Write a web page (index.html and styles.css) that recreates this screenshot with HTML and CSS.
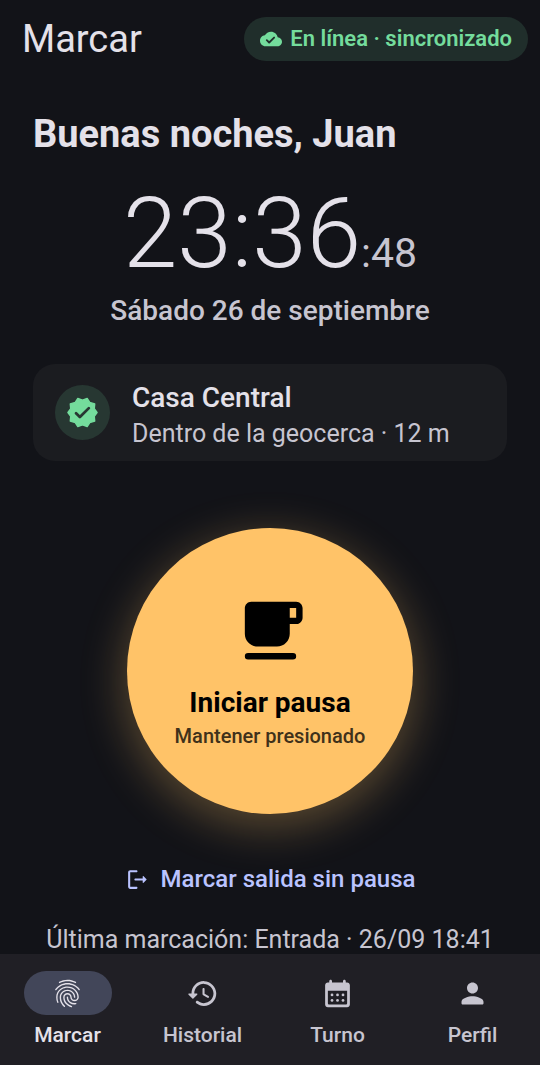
FILE: index.html
```html
<!DOCTYPE html>
<html lang="es">
<head>
<meta charset="utf-8">
<meta name="viewport" content="width=device-width, initial-scale=1">
<title>Marcar</title>
<link rel="stylesheet" href="styles.css">
</head>
<body class="app">
<header class="topbar">
  <h1 class="topbar-title">Marcar</h1>
  <div class="sync" role="status">
    <svg class="icon-sync" viewBox="0 0 24 24" aria-hidden="true">
      <path fill="currentColor" d="M19.35 10.04C18.67 6.59 15.64 4 12 4 9.11 4 6.6 5.64 5.35 8.04 2.34 8.36 0 10.91 0 14c0 3.31 2.69 6 6 6h13c2.76 0 5-2.24 5-5 0-2.64-2.05-4.78-4.65-4.96z"/>
      <path class="sync-check" d="M7.4 13.2l2.6 2.6 5.4-5.4"/>
    </svg>
    <span>En línea · sincronizado</span>
  </div>
</header>

<main class="content">
  <h2 class="greeting">Buenas noches, Juan</h2>
  <time class="clock">23:36<span class="seconds">:48</span></time>
  <p class="date">Sábado 26 de septiembre</p>

  <section class="place">
    <span class="place-badge">
      <svg class="icon-place" viewBox="0 0 24 24" aria-hidden="true">
        <path class="star" d="M22.6 12l-2.04-2.79.34-3.49-3.61-1.03L15.4 1.8 12 2.96 8.6 1.8 6.71 4.69 3.1 5.7l.34 3.5L1.4 12l2.04 2.79-.34 3.5 3.61 1.02L8.6 22.2l3.4-1.17 3.4 1.16 1.89-2.89 3.61-1.02-.34-3.49z"/>
        <path class="star-check" d="M7.3 12.5l2.8 2.8 6.5-6.5"/>
      </svg>
    </span>
    <div class="place-text">
      <h3 class="place-name">Casa Central</h3>
      <p class="place-info">Dentro de la geocerca · 12 m</p>
    </div>
  </section>

  <button class="punch" type="button">
    <svg class="icon-cup" viewBox="0 0 24 24" aria-hidden="true">
      <path fill="currentColor" fill-rule="evenodd" d="M6 3h14c1.1 0 2 .9 2 2v3c0 1.1-.9 2-2 2h-2v3c0 2.21-1.79 4-4 4H8c-2.21 0-4-1.79-4-4V5c0-1.1.9-2 2-2zm12 2v3h2V5zM5 19h14a1 1 0 0 1 0 2H5a1 1 0 0 1 0-2z"/>
    </svg>
    <span class="punch-label">Iniciar pausa</span>
    <span class="punch-hint">Mantener presionado</span>
  </button>

  <button class="leave" type="button">
    <svg class="icon-leave" viewBox="0 0 24 24" aria-hidden="true">
      <path fill="currentColor" d="M5 5h6c.55 0 1-.45 1-1s-.45-1-1-1H5c-1.1 0-2 .9-2 2v14c0 1.1.9 2 2 2h6c.55 0 1-.45 1-1s-.45-1-1-1H5V5zm15.65 6.65-2.79-2.79a.5.5 0 0 0-.86.35V11h-7c-.55 0-1 .45-1 1s.45 1 1 1h7v1.79c0 .45.54.67.85.35l2.79-2.79c.2-.19.2-.51.01-.7z"/>
    </svg>
    <span>Marcar salida sin pausa</span>
  </button>

  <p class="last">Última marcación: Entrada · 26/09 18:41</p>
</main>

<nav class="tabs">
  <a class="tab tab-active" href="#marcar" aria-current="page">
    <span class="tab-pill">
      <svg class="icon-tab" viewBox="0 0 24 24" aria-hidden="true">
        <path fill="currentColor" d="M17.81 4.47c-.08 0-.16-.02-.23-.06C15.66 3.42 14 3 12.01 3c-1.98 0-3.86.47-5.57 1.41-.24.13-.54.04-.68-.2-.13-.24-.04-.55.2-.68C7.82 2.52 9.86 2 12.01 2c2.13 0 3.99.47 6.03 1.52.25.13.34.43.21.67-.09.18-.26.28-.44.28zM3.5 9.72c-.1 0-.2-.03-.29-.09-.23-.16-.28-.47-.12-.7.99-1.4 2.25-2.5 3.75-3.27C9.98 4.04 14 4.03 17.15 5.65c1.5.77 2.76 1.86 3.75 3.25.16.22.11.54-.12.7-.23.16-.54.11-.7-.12-.9-1.26-2.04-2.25-3.39-2.94-2.87-1.47-6.54-1.47-9.4.01-1.36.7-2.5 1.7-3.4 2.96-.08.14-.23.21-.39.21zm6.25 12.07c-.13 0-.26-.05-.35-.15-.87-.87-1.34-1.43-2.01-2.64-.69-1.23-1.05-2.73-1.05-4.34 0-2.97 2.54-5.39 5.66-5.39s5.66 2.42 5.66 5.39c0 .28-.22.5-.5.5s-.5-.22-.5-.5c0-2.42-2.09-4.39-4.66-4.39-2.57 0-4.66 1.97-4.66 4.39 0 1.44.32 2.77.93 3.85.64 1.15 1.08 1.64 1.85 2.42.19.2.19.51 0 .71-.11.1-.24.15-.37.15zm7.17-1.85c-1.19 0-2.24-.3-3.1-.89-1.49-1.01-2.38-2.65-2.38-4.39 0-.28.22-.5.5-.5s.5.22.5.5c0 1.41.72 2.74 1.94 3.56.71.48 1.54.71 2.54.71.24 0 .64-.03 1.04-.1.27-.05.53.13.58.41.05.27-.13.53-.41.58-.57.11-1.07.12-1.21.12zM14.91 22c-.04 0-.09-.01-.13-.02-1.59-.44-2.63-1.03-3.72-2.1-1.4-1.39-2.17-3.24-2.17-5.22 0-1.62 1.38-2.94 3.08-2.94 1.7 0 3.08 1.32 3.08 2.94 0 1.07.93 1.94 2.08 1.94s2.08-.87 2.08-1.94c0-3.77-3.25-6.83-7.25-6.83-2.84 0-5.44 1.58-6.61 4.03-.39.81-.59 1.76-.59 2.8 0 .78.07 2.01.67 3.61.1.26-.03.55-.29.64-.26.1-.55-.04-.64-.29-.49-1.31-.73-2.61-.73-3.96 0-1.2.23-2.29.68-3.24 1.33-2.79 4.28-4.6 7.51-4.6 4.55 0 8.25 3.51 8.25 7.83 0 1.62-1.38 2.94-3.08 2.94s-3.08-1.32-3.08-2.94c0-1.07-.93-1.94-2.08-1.94s-2.08.87-2.08 1.94c0 1.71.66 3.31 1.87 4.51.95.94 1.86 1.46 3.27 1.85.27.07.42.35.35.61-.05.23-.26.38-.47.38z"/>
      </svg>
    </span>
    <span>Marcar</span>
  </a>
  <a class="tab" href="#historial">
    <span class="tab-pill">
      <svg class="icon-tab" viewBox="0 0 24 24" aria-hidden="true">
        <path fill="currentColor" d="M13.26 3C8.17 2.86 4 6.95 4 12H2.21c-.45 0-.67.54-.35.85l2.79 2.8c.2.2.51.2.71 0l2.79-2.8c.31-.31.09-.85-.36-.85H6c0-3.9 3.18-7.05 7.1-7 3.72.05 6.85 3.18 6.9 6.9.05 3.91-3.1 7.1-7 7.1-1.61 0-3.1-.55-4.28-1.48-.4-.31-.96-.28-1.32.08-.42.42-.39 1.13.08 1.49C9 20.29 10.91 21 13 21c5.05 0 9.14-4.17 9-9.26-.13-4.69-4.05-8.61-8.74-8.74zm-.51 5c-.41 0-.75.34-.75.75v3.68c0 .35.19.68.49.86l3.12 1.85c.36.21.82.09 1.03-.26.21-.36.09-.82-.26-1.03l-2.88-1.71v-3.4c0-.4-.34-.74-.75-.74z"/>
      </svg>
    </span>
    <span>Historial</span>
  </a>
  <a class="tab" href="#turno">
    <span class="tab-pill">
      <svg class="icon-tab" viewBox="0 0 24 24" aria-hidden="true">
        <path fill="currentColor" fill-rule="evenodd" d="M19 4h-1V3c0-.55-.45-1-1-1s-1 .45-1 1v1H8V3c0-.55-.45-1-1-1s-1 .45-1 1v1H5c-1.11 0-2 .9-2 2v14c0 1.1.89 2 2 2h14c1.1 0 2-.9 2-2V6c0-1.1-.9-2-2-2zm0 15c0 .55-.45 1-1 1H6c-.55 0-1-.45-1-1v-9h14v9z"/>
        <g fill="currentColor">
          <circle cx="8" cy="13" r="1"/><circle cx="12" cy="13" r="1"/><circle cx="16" cy="13" r="1"/>
          <circle cx="8" cy="17" r="1"/><circle cx="12" cy="17" r="1"/><circle cx="16" cy="17" r="1"/>
        </g>
      </svg>
    </span>
    <span>Turno</span>
  </a>
  <a class="tab" href="#perfil">
    <span class="tab-pill">
      <svg class="icon-tab" viewBox="0 0 24 24" aria-hidden="true">
        <path fill="currentColor" d="M12 12c2.21 0 4-1.79 4-4s-1.79-4-4-4-4 1.79-4 4 1.79 4 4 4zm0 2c-2.67 0-8 1.34-8 4v1c0 .55.45 1 1 1h14c.55 0 1-.45 1-1v-1c0-2.66-5.33-4-8-4z"/>
      </svg>
    </span>
    <span>Perfil</span>
  </a>
</nav>
</body>
</html>
```
FILE: styles.css
```css
* {
  box-sizing: border-box;
}

.app {
  margin: 0;
  min-height: 100vh;
  display: flex;
  flex-direction: column;
  background: #121318;
  color: #e4e1e9;
  font-family: Roboto, "Noto Sans", sans-serif;
}

h1, h2, h3, p {
  margin: 0;
}

button {
  border: 0;
  font-family: inherit;
  cursor: pointer;
}

svg {
  display: block;
  flex: none;
}

.topbar {
  display: flex;
  align-items: center;
  justify-content: space-between;
  min-height: 77px;
  padding: 0 12px 0 22px;
}

.topbar-title {
  font-size: 38px;
  line-height: 48px;
  font-weight: 400;
}

.sync {
  display: flex;
  align-items: center;
  gap: 8px;
  padding: 8px 16px;
  border-radius: 22px;
  background: #202e2b;
  color: #74dc9c;
  font-size: 22px;
  line-height: 28px;
  font-weight: 600;
}

.icon-sync {
  width: 22px;
  height: 22px;
}

.sync-check {
  fill: none;
  stroke: #202e2b;
  stroke-width: 2;
  stroke-linecap: round;
  stroke-linejoin: round;
}

.content {
  flex: 1;
  display: flex;
  flex-direction: column;
  align-items: center;
  padding: 33px 33px 0;
}

.greeting {
  align-self: stretch;
  font-size: 38px;
  line-height: 48px;
  font-weight: 700;
}

.clock {
  margin-top: 26px;
  font-size: 98px;
  line-height: 100px;
  font-weight: 300;
}

.seconds {
  color: #c7c5d0;
  font-size: 41px;
  line-height: 48px;
  font-weight: 400;
}

.date {
  margin-top: 11px;
  color: #c7c5d0;
  font-size: 28px;
  line-height: 32px;
  font-weight: 500;
}

.place {
  align-self: stretch;
  display: flex;
  align-items: center;
  gap: 22px;
  margin-top: 37px;
  padding: 9px 22px;
  border-radius: 22px;
  background: #1b1c20;
}

.place-badge {
  display: grid;
  place-items: center;
  width: 55px;
  height: 55px;
  border-radius: 50%;
  background: #273732;
  color: #74dc9c;
}

.icon-place {
  width: 33px;
  height: 33px;
}

.star {
  fill: currentColor;
  stroke: currentColor;
  stroke-width: 1;
  stroke-linejoin: round;
}

.star-check {
  fill: none;
  stroke: #273732;
  stroke-width: 2;
  stroke-linecap: round;
  stroke-linejoin: round;
}

.place-text {
  padding-top: 6px;
}

.place-name {
  font-size: 28px;
  line-height: 37px;
  font-weight: 500;
}

.place-info {
  color: #c7c5d0;
  font-size: 25px;
  line-height: 36px;
}

.punch {
  display: flex;
  flex-direction: column;
  align-items: center;
  justify-content: center;
  width: 286px;
  height: 286px;
  margin-top: 67px;
  padding: 0;
  border-radius: 50%;
  background: #ffc368;
  color: #000;
  box-shadow: 0 11px 44px 3px rgba(255, 195, 104, 0.3);
}

.icon-cup {
  width: 77px;
  height: 77px;
}

.punch-label {
  margin-top: 16px;
  font-size: 28px;
  line-height: 36px;
  font-weight: 700;
}

.punch-hint {
  color: #40311a;
  font-size: 20px;
  line-height: 30px;
  font-weight: 500;
}

.leave {
  display: flex;
  align-items: center;
  gap: 11px;
  height: 48px;
  margin-top: 41px;
  padding: 0 16px;
  background: none;
  color: #bac3ff;
  font-size: 24px;
  line-height: 32px;
  font-weight: 500;
}

.icon-leave {
  width: 25px;
  height: 25px;
}

.last {
  margin-top: 23px;
  color: #c7c5d0;
  font-size: 25px;
  line-height: 28px;
}

.tabs {
  display: grid;
  grid-template-columns: repeat(4, 1fr);
  padding: 17px 0 16px;
  background: #201f25;
}

.tab {
  display: flex;
  flex-direction: column;
  align-items: center;
  gap: 6px;
  color: #c7c5d0;
  font-size: 21px;
  line-height: 28px;
  font-weight: 500;
  text-decoration: none;
}

.tab-pill {
  display: grid;
  place-items: center;
  width: 88px;
  height: 44px;
  border-radius: 22px;
}

.tab-active {
  color: #e4e1e9;
}

.tab-active .tab-pill {
  background: #424659;
}

.icon-tab {
  width: 33px;
  height: 33px;
}
```
